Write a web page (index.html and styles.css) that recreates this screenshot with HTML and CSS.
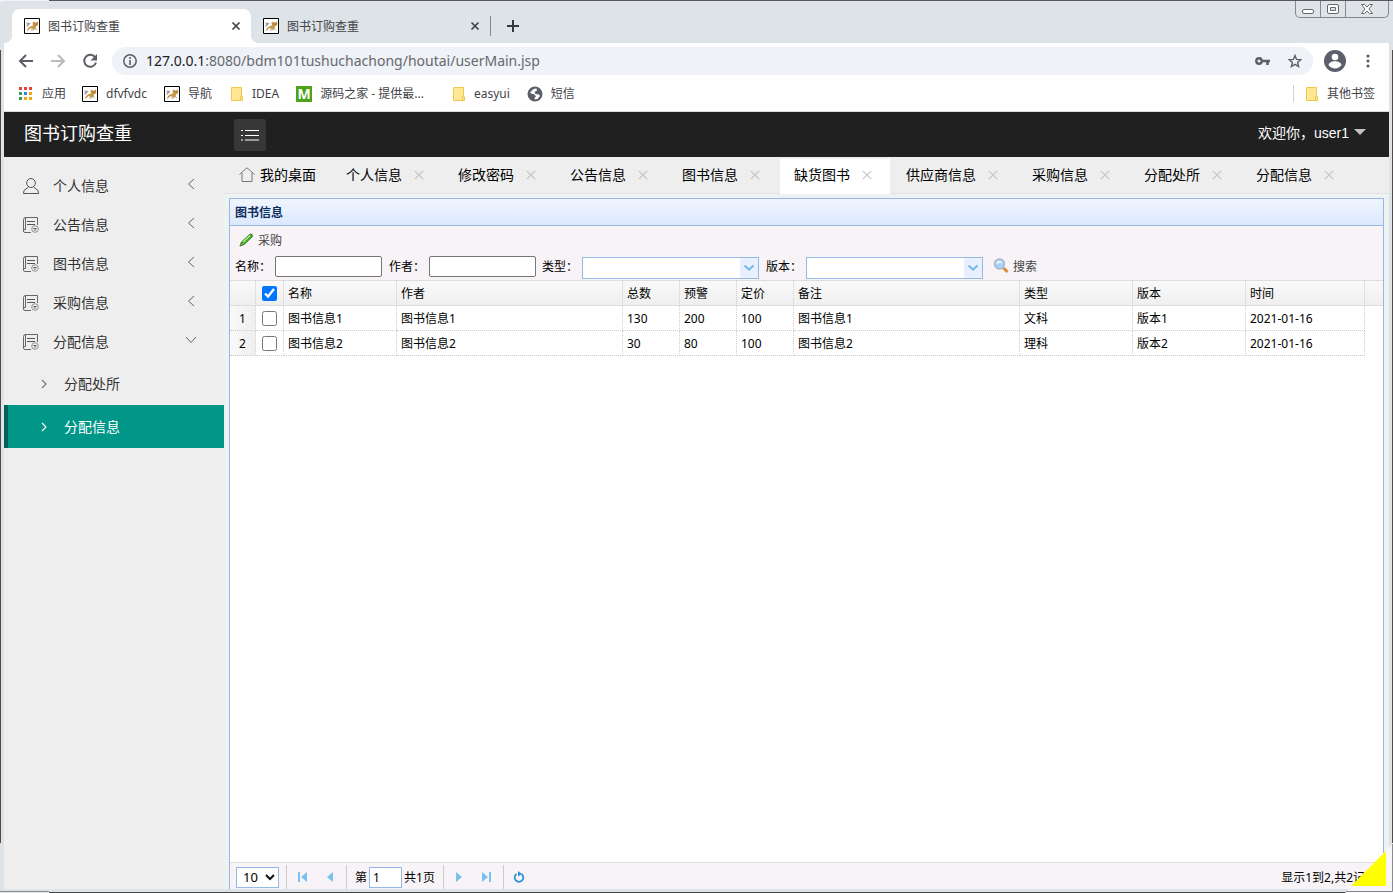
FILE: index.html
```
<!DOCTYPE html>
<html lang="zh-CN">
<head>
<meta charset="utf-8">
<title>图书订购查重</title>
<link rel="stylesheet" href="styles.css">
</head>
<body>
<svg class="defs" aria-hidden="true">
  <symbol id="cat" viewBox="0 0 16 16">
    <path d="M.5.5h15v15H.5z" fill="#fff" stroke="#000"/>
    <path d="M2.500 6l2-1.500L7 5.500 5 7 3.500 9z" fill="#b9b5ae"/>
    <path d="M8.500 4.500l1-1 1.500 1h1.500L14 3l.3 2.500-.5 2-1.800 1-.5 2.500-2 .5L6.500 10 4 12.500H2.500l2-3L7 8l2-.5z" fill="#c9994a"/>
    <path d="M2.300 5l2.700.5-2.500 3M7 11.500l1.500.8 2-.8M11.500 10.500l1.500 1.800" fill="none" stroke="#85837d" stroke-width=".7"/>
    <path d="M10.500 6h.8M12.500 6h.8" stroke="#5b3b10"/>
  </symbol>
  <symbol id="folder" viewBox="0 0 12 14">
    <path d="M.5.5h10v8.500l1 1v3.500H.5z" fill="#ffe793" stroke="#f0c64c"/>
    <path d="M9.500 13V9.500h1.500" fill="none" stroke="#f0c64c"/>
  </symbol>
  <symbol id="x" viewBox="0 0 10 10"><path d="M.8.8l8.400 8.400M9.200.8L.8 9.200" fill="none" stroke="currentColor" stroke-width="1.200"/></symbol>
  <symbol id="bx" viewBox="0 0 10 10"><path d="M1.500 1.500l7 7M8.500 1.500l-7 7" fill="none" stroke="#3f4348" stroke-width="1.700"/></symbol>
  <symbol id="left" viewBox="0 0 8 12"><path d="M7 1L1.500 6 7 11" fill="none" stroke="currentColor"/></symbol>
  <symbol id="right" viewBox="0 0 6 10"><path d="M1 1l4 4-4 4" fill="none" stroke="currentColor" stroke-width="1.200"/></symbol>
  <symbol id="doc" viewBox="0 0 16 16">
    <path d="M14.500 8V.5h-12v12H.5v1.500q0 1.500 1.500 1.500h6M2.500.5Q.5.500.5 2.500v11" fill="none" stroke="#666"/>
    <path d="M4 4.500h8M4 7.500h8" stroke="#555"/>
    <circle cx="12" cy="12" r="3.300" fill="#eee" stroke="#888" stroke-width=".9"/>
    <path d="M10.300 11.500h3.400M12 11.500v2.500" stroke="#666"/>
  </symbol>
  <symbol id="drop" viewBox="0 0 12 8"><path d="M1.500 1.500L6 5.500l4.500-4" fill="none" stroke="#76bdec" stroke-width="2.200"/></symbol>
</svg>
<div class="window">
  <header class="tabstrip">
    <div class="btab active"><svg class="i16"><use href="#cat"/></svg><span>图书订购查重</span><button aria-label="关闭标签页"><svg class="i10"><use href="#bx"/></svg></button></div>
    <div class="btab"><svg class="i16"><use href="#cat"/></svg><span>图书订购查重</span><button aria-label="关闭标签页"><svg class="i10"><use href="#bx"/></svg></button></div>
    <button class="newtab" aria-label="新标签页"><svg width="12" height="12" viewBox="0 0 12 12"><path d="M6 0v12M0 6h12" stroke="#35393e" stroke-width="2"/></svg></button>
    <div class="wincontrols">
      <button aria-label="最小化"><svg class="min" width="12" height="5" viewBox="0 0 12 5"><rect x=".5" y=".5" width="11" height="4" rx="1.500" fill="#fff" stroke="#666970"/></svg></button>
      <button aria-label="还原"><svg width="12" height="10" viewBox="0 0 12 10"><rect x=".5" y=".5" width="11" height="9" rx="1.500" fill="#fff" stroke="#666970"/><path d="M3.500 3.500h5v3h-5z" fill="#dee3e7" stroke="#666970"/></svg></button>
      <button class="wclose" aria-label="关闭"><svg width="12" height="10" viewBox="0 0 12 10"><path d="M.5.5h3L6 3 8.500.5h3L8 5l3.500 4.500h-3L6 7 3.500 9.500h-3L4 5z" fill="#fff" stroke="#666970"/></svg></button>
    </div>
  </header>
  <div class="navbar">
    <button class="back" aria-label="后退"><svg width="16" height="14" viewBox="0 0 16 14"><path d="M15 7H2M8 1L2 7l6 6" fill="none" stroke="#5c5f66" stroke-width="2"/></svg></button>
    <button class="fwd" aria-label="前进"><svg width="16" height="14" viewBox="0 0 16 14"><path d="M1 7h13M8 1l6 6-6 6" fill="none" stroke="#b9bbbf" stroke-width="2"/></svg></button>
    <button class="reload" aria-label="重新加载"><svg width="16" height="16" viewBox="0 0 16 16"><path d="M13.300 4.500A6 6 0 1 0 14 9.500" fill="none" stroke="#5c5f66" stroke-width="2"/><path d="M15 1v6.500H8.500z" fill="#5c5f66"/></svg></button>
    <div class="omnibox">
      <svg width="14" height="14" viewBox="0 0 14 14"><circle cx="7" cy="7" r="6.200" fill="none" stroke="#5c5f66" stroke-width="1.500"/><path d="M7 3v2M7 6v5" stroke="#5c5f66" stroke-width="1.600"/></svg>
      <span class="url"><b>127.0.0.1</b>:8080/bdm101tushuchachong/houtai/userMain.jsp</span>
      <svg width="15" height="8" viewBox="0 0 15 8"><circle cx="4" cy="4" r="2.700" fill="none" stroke="#5c5f66" stroke-width="2.400"/><path d="M7 4h8M12.500 4v4" stroke="#5c5f66" stroke-width="2.600"/></svg>
      <svg class="star" width="14" height="14" viewBox="0 0 14 14"><path d="M7 1.500l1.600 3.900 4.200.3-3.200 2.700 1 4.100L7 10.300l-3.600 2.200 1-4.100L1.200 5.700l4.200-.3z" fill="none" stroke="#5c5f66" stroke-width="1.400"/></svg>
    </div>
    <button class="avatar" aria-label="用户"><svg width="22" height="22" viewBox="0 0 22 22"><circle cx="11" cy="11" r="11" fill="#5c5f6b"/><circle cx="11" cy="7" r="3.300" fill="#fff"/><path d="M4.500 15c1-5 12-5 13 0-3 4.500-10 4.500-13 0z" fill="#fff"/></svg></button>
    <button class="more" aria-label="菜单"><svg width="4" height="14" viewBox="0 0 4 14" fill="#5c5f66"><circle cx="2" cy="2" r="1.600"/><circle cx="2" cy="7" r="1.600"/><circle cx="2" cy="12" r="1.600"/></svg></button>
  </div>
  <nav class="bookmarks">
    <a href="#" class="apps"><svg width="14" height="14" viewBox="0 0 14 14"><path d="M0 0h3v3H0zM5 0h3v3H5zM10 0h3v3h-3z" fill="#ea4335"/><path d="M0 5h3v3H0zM0 10h3v3H0z" fill="#2f9e58"/><path d="M5 5h3v3H5z" fill="#2b83f0"/><path d="M10 5h3v3h-3zM5 10h3v3H5zM10 10h3v3h-3z" fill="#f2a60c"/></svg><span>应用</span></a>
    <a href="#"><svg class="i16"><use href="#cat"/></svg><span>dfvfvdc</span></a>
    <a href="#"><svg class="i16"><use href="#cat"/></svg><span>导航</span></a>
    <a href="#" class="folder"><svg width="12" height="14"><use href="#folder"/></svg><span>IDEA</span></a>
    <a href="#"><i class="mlogo">M</i><span>源码之家 - 提供最...</span></a>
    <a href="#" class="folder late"><svg width="12" height="14"><use href="#folder"/></svg><span>easyui</span></a>
    <a href="#"><svg width="16" height="16" viewBox="0 0 16 16"><circle cx="8" cy="8" r="7.500" fill="#5c5f6b"/><path d="M3 6.500L6.500 3l3-.5.5 2-2.500 1.500 1 2 3.500.5L13 10l-2.500 3-3 .5L8 11 5.500 8.500z" fill="#fff"/><path d="M4 7.500l3.500 1 1.500 2-1.500 1z" fill="#5c5f6b"/></svg><span>短信</span></a>
    <a href="#" class="folder others"><svg width="12" height="14"><use href="#folder"/></svg><span>其他书签</span></a>
  </nav>
  <div class="app">
    <header class="apphead">
      <h1>图书订购查重</h1>
      <button class="burger" aria-label="折叠菜单"><svg width="18" height="12" viewBox="0 0 18 12"><path d="M0 1.500h2M4 1.500h14M0 6.500h2M4 6.500h14M0 11h2M4 11h14" stroke="#fff" stroke-width="1.200"/></svg></button>
      <button class="user"><span>欢迎你<span class="punct">，</span>user1</span><svg width="12" height="6" viewBox="0 0 12 6"><path d="M0 0h12L6 6z" fill="#c2c2c2"/></svg></button>
    </header>
    <div class="body">
      <aside class="sidebar">
        <a href="#" class="item"><svg class="i16" viewBox="0 0 16 16"><ellipse cx="8" cy="5" rx="4.300" ry="4.500" fill="none" stroke="#555"/><path d="M5.500 9L1 12.500.5 15.500h15l-.5-3L10.500 9" fill="none" stroke="#555"/></svg><span>个人信息</span><svg class="arrow"><use href="#left"/></svg></a>
        <a href="#" class="item"><svg class="i16"><use href="#doc"/></svg><span>公告信息</span><svg class="arrow"><use href="#left"/></svg></a>
        <a href="#" class="item"><svg class="i16"><use href="#doc"/></svg><span>图书信息</span><svg class="arrow"><use href="#left"/></svg></a>
        <a href="#" class="item"><svg class="i16"><use href="#doc"/></svg><span>采购信息</span><svg class="arrow"><use href="#left"/></svg></a>
        <a href="#" class="item open"><svg class="i16"><use href="#doc"/></svg><span>分配信息</span><svg class="arrow" viewBox="0 0 12 8"><path d="M1 1l5 5.500L11 1" fill="none" stroke="currentColor"/></svg></a>
        <a href="#" class="sub"><svg width="6" height="10"><use href="#right"/></svg><span>分配处所</span></a>
        <a href="#" class="sub selected"><svg width="6" height="10"><use href="#right"/></svg><span>分配信息</span></a>
      </aside>
      <main class="content">
        <nav class="tabs">
          <div class="tab home"><svg class="i16" viewBox="0 0 16 16"><path d="M.5 7.500L8 .8l7.500 6.700M3 6v8.500h10V6" fill="none" stroke="#777"/></svg><a href="#">我的桌面</a></div>
          <div class="tab"><a href="#">个人信息</a><button aria-label="关闭"><svg class="i10"><use href="#x"/></svg></button></div>
          <div class="tab"><a href="#">修改密码</a><button aria-label="关闭"><svg class="i10"><use href="#x"/></svg></button></div>
          <div class="tab"><a href="#">公告信息</a><button aria-label="关闭"><svg class="i10"><use href="#x"/></svg></button></div>
          <div class="tab"><a href="#">图书信息</a><button aria-label="关闭"><svg class="i10"><use href="#x"/></svg></button></div>
          <div class="tab current"><a href="#">缺货图书</a><button aria-label="关闭"><svg class="i10"><use href="#x"/></svg></button></div>
          <div class="tab"><a href="#">供应商信息</a><button aria-label="关闭"><svg class="i10"><use href="#x"/></svg></button></div>
          <div class="tab"><a href="#">采购信息</a><button aria-label="关闭"><svg class="i10"><use href="#x"/></svg></button></div>
          <div class="tab"><a href="#">分配处所</a><button aria-label="关闭"><svg class="i10"><use href="#x"/></svg></button></div>
          <div class="tab"><a href="#">分配信息</a><button aria-label="关闭"><svg class="i10"><use href="#x"/></svg></button></div>
        </nav>
        <section class="panel">
          <h2>图书信息</h2>
          <div class="tools">
            <button class="tool"><svg class="i16" viewBox="0 0 16 16"><path d="M2 14l1.500-4L11.500 2.500q1.500-1 2.500 0t0 2.500L6 12.500z" fill="#4fb52a" stroke="#1f6a17" stroke-width=".9"/><path d="M5 10l7-6.500" stroke="#b5ea8b" stroke-width="1.400"/><path d="M2 14l1-2.800 1.800 1.600z" fill="#e8d9b0" stroke="#4a5a30" stroke-width=".6"/></svg><span>采购</span></button>
            <form class="search">
              <label for="name">名称<span class="punct">：</span></label><input id="name" type="text">
              <label for="author">作者<span class="punct">：</span></label><input id="author" type="text">
              <label for="type">类型<span class="punct">：</span></label><span class="combo"><select id="type"><option></option></select><i><svg width="12" height="8"><use href="#drop"/></svg></i></span>
              <label for="edition">版本<span class="punct">：</span></label><span class="combo"><select id="edition"><option></option></select><i><svg width="12" height="8"><use href="#drop"/></svg></i></span>
              <button class="tool find" type="button"><svg class="i16" viewBox="0 0 16 16"><path d="M10.500 10l4 4" stroke="#dc8a2e" stroke-width="3"/><circle cx="6.500" cy="6" r="5" fill="#a6d4f8" stroke="#a9b6cb" stroke-width="1.400"/><path d="M3 6q.5-3 3.500-3.300Q9 3 9.500 5 6 4.500 3 6z" fill="#e6f5ff"/></svg><span>搜索</span></button>
            </form>
          </div>
          <table>
            <colgroup><col class="c-no"><col class="c-chk"><col class="c-m"><col class="c-l"><col class="c-s"><col class="c-s"><col class="c-s"><col class="c-l"><col class="c-m"><col class="c-m"><col class="c-date"><col></colgroup>
            <thead><tr><th></th><th><input type="checkbox" checked aria-label="全选"></th><th>名称</th><th>作者</th><th>总数</th><th>预警</th><th>定价</th><th>备注</th><th>类型</th><th>版本</th><th>时间</th><th></th></tr></thead>
            <tbody>
              <tr><td>1</td><td><input type="checkbox" aria-label="选择第1行"></td><td>图书信息1</td><td>图书信息1</td><td>130</td><td>200</td><td>100</td><td>图书信息1</td><td>文科</td><td>版本1</td><td>2021-01-16</td><td></td></tr>
              <tr><td>2</td><td><input type="checkbox" aria-label="选择第2行"></td><td>图书信息2</td><td>图书信息2</td><td>30</td><td>80</td><td>100</td><td>图书信息2</td><td>理科</td><td>版本2</td><td>2021-01-16</td><td></td></tr>
            </tbody>
          </table>
          <footer class="pager">
            <span class="size"><select aria-label="每页条数"><option>10</option></select><svg width="10" height="7" viewBox="0 0 10 7"><path d="M1 1l4 4 4-4" fill="none" stroke="#111" stroke-width="2"/></svg></span>
            <div class="group"><button aria-label="首页"><svg width="9" height="10" viewBox="0 0 9 10"><path d="M0 0h2v10H0zM9 0v10L3 5z" fill="#7cc0ef"/></svg></button><button aria-label="上一页"><svg width="9" height="10" viewBox="0 0 9 10"><path d="M7 0v10L1 5z" fill="#7cc0ef"/></svg></button></div>
            <div class="group page"><label for="page">第</label><input id="page" type="text" value="1"><span>共1页</span></div>
            <div class="group"><button aria-label="下一页"><svg width="9" height="10" viewBox="0 0 9 10"><path d="M2 0v10l6-5z" fill="#7cc0ef"/></svg></button><button aria-label="末页"><svg width="9" height="10" viewBox="0 0 9 10"><path d="M7 0h2v10H7zM0 0v10l6-5z" fill="#7cc0ef"/></svg></button></div>
            <div class="group"><button aria-label="刷新"><svg width="12" height="12" viewBox="0 0 12 12"><path d="M8.500 3A4.300 4.300 0 1 1 3.500 3" fill="none" stroke="#2e93d6" stroke-width="1.800"/><path d="M5 0l4 3-4 2.500z" fill="#2e93d6"/></svg></button></div>
            <span class="info">显示1到2,共2记录</span>
          </footer>
        </section>
      </main>
    </div>
  </div>
  <svg class="corner" width="48" height="50" viewBox="0 0 48 50" aria-hidden="true"><path d="M48 0v50H0z" fill="#f6f6fa"/><path d="M47.500 1v47.500H1" fill="none" stroke="#8b8b8f"/><path d="M41 8v35H6z" fill="#ff0"/></svg>
</div>
</body>
</html>
```
FILE: styles.css
```
* { box-sizing: border-box; }
body { margin: 0; font: 12px/16px "Noto Sans", "Noto Sans CJK SC", sans-serif; color: #000; }
button { border: 0; padding: 0; background: none; font: inherit; color: inherit; display: flex; align-items: center; justify-content: center; }
a { color: inherit; text-decoration: none; }
svg { display: block; flex: none; }
h1, h2 { margin: 0; }
input, select { font: inherit; margin: 0; }
.defs { position: absolute; width: 0; height: 0; }
.i16 { width: 16px; height: 16px; }
.i10 { width: 10px; height: 10px; }
.punct { font-family: "Noto Sans CJK TC", sans-serif; line-height: 1; }

.window {
  position: relative; display: flex; flex-direction: column; height: 100vh; overflow: hidden; padding: 1px 4px 4px;
  background:
    linear-gradient(#4f4a4c, #4f4a4c) 0 50px / 1px calc(100% - 100px) no-repeat,
    linear-gradient(#4f4a4c, #4f4a4c) 100% 50px / 1px calc(100% - 100px) no-repeat,
    linear-gradient(#5b5659, #5b5659) 49px 0 / calc(100% - 49px) 1px no-repeat,
    linear-gradient(#8b8b8f, #8b8b8f) 0 calc(100% - 1px) / 49px 1px no-repeat,
    linear-gradient(#444, #444) 49px 100% / 100% 1px no-repeat,
    linear-gradient(#f4f1f4, #f4f1f4) 0 0 / 49px 2px no-repeat,
    #dee3e7;
}

.tabstrip { display: flex; flex: none; height: 42px; padding: 8px 0 0 8px; background: #dee3e7; }
.btab { display: flex; align-items: center; gap: 8px; width: 239px; padding: 0 10px 0 12px; color: #3f4348; }
.btab span { flex: 1; padding-top: 2px; }
.btab.active { position: relative; background: #fff; border-radius: 8px 8px 0 0; }
.btab.active::before, .btab.active::after { content: ""; position: absolute; bottom: 0; width: 8px; height: 8px; }
.btab.active::before { left: -8px; background: radial-gradient(circle at 0 0, transparent 8px, #fff 8px); }
.btab.active::after { right: -8px; background: radial-gradient(circle at 100% 0, transparent 8px, #fff 8px); }
.newtab { align-self: center; height: 20px; padding-left: 16px; border-left: 1px solid #85898e; }
.wincontrols { position: absolute; top: 1px; right: 4px; display: flex; border: 1px solid #85868e; border-top: 0; border-radius: 0 0 5px 5px; }
.wincontrols button { width: 25px; height: 16px; border-right: 1px solid #85868e; }
.wincontrols .wclose { width: 42px; border: 0; }
.min { margin-top: 4px; }

.navbar { display: flex; flex: none; align-items: center; height: 36px; padding: 0 19px 0 14px; background: #fff; }
.back, .fwd { width: 16px; margin-right: 16px; }
.reload { margin-right: 14px; }
.omnibox { display: flex; flex: 1; align-items: center; gap: 9px; height: 28px; padding: 0 11px; border-radius: 14px; background: #eff2f7; }
.url { flex: 1; font-size: 14px; line-height: 20px; color: #66696e; }
.url b { font-weight: 400; color: #202124; }
.star { margin-left: 9px; }
.avatar { margin: 0 20px 0 11px; }

.bookmarks { display: flex; flex: none; align-items: center; gap: 17px; height: 32px; padding: 0 14px 3px 15px; background: #fff; color: #3f4348; }
.bookmarks a { display: flex; align-items: center; gap: 8px; white-space: nowrap; }
.bookmarks span { padding-top: 1px; }
.bookmarks .apps { gap: 9px; margin-right: -1px; }
.bookmarks .folder { gap: 9px; padding-left: 2px; }
.bookmarks .late { padding-left: 12px; }
.bookmarks .others { margin-left: auto; padding-left: 12px; border-left: 1px solid #cfd1d4; }
.mlogo { display: grid; place-items: center; width: 16px; height: 16px; background: #4ea21d; color: #fff; font: bold 14px/16px "Open Sans", sans-serif; }

.app { display: flex; flex: 1; flex-direction: column; min-height: 0; border-top: 1px solid #d9dbdd; background: #eee; }
.apphead { display: flex; flex: none; align-items: center; height: 45px; padding: 0 23px 0 20px; background: #202020; color: #fff; font-size: 14px; }
.apphead h1 { width: 210px; padding-bottom: 4px; font-size: 18px; font-weight: 400; line-height: 24px; }
.burger { width: 32px; height: 32px; border-radius: 2px; background: #373737; }
.user { margin-left: auto; padding-bottom: 3px; gap: 5px; font-family: "Liberation Sans", "Noto Sans CJK SC", sans-serif; }
.user svg { margin-bottom: 3px; }
.body { display: flex; flex: 1; min-height: 0; font-size: 14px; line-height: 20px; }
.sidebar { flex: none; width: 220px; padding-top: 10px; color: #333; }
.item { display: flex; align-items: center; height: 39px; padding: 0 27px 2px 19px; }
.item span { flex: 1; padding: 1px 0 0 14px; }
.arrow { width: 8px; height: 12px; margin: 0 2px 4px 0; color: #666; }
.open .arrow { width: 12px; height: 8px; margin-right: 0; }
.sub { display: flex; align-items: center; gap: 17px; height: 43px; padding-left: 37px; }
.sub svg { color: #777; }
.sub.selected { padding-left: 33px; border-left: 4px solid #005f56; background: #009688; color: #fff; }
.sub.selected svg { color: #fff; }

.content { display: flex; flex: 1; flex-direction: column; min-width: 0; background: #eef2f0; }
.tabs { display: flex; flex: none; gap: 2px; height: 37px; padding-top: 2px; background: #eee; border-bottom: 1px solid #e2e2e2; }
.tab { display: flex; align-items: center; gap: 12px; padding: 0 18px 3px 14px; white-space: nowrap; }
.tab button { color: #c4c4c4; }
.tab.home { gap: 5px; padding: 0 14px 3px 15px; }
.tab.current { margin-bottom: -1px; padding-bottom: 4px; background: #fff; }
.panel { display: flex; flex: 1; flex-direction: column; min-height: 0; margin: 4px 5px 0; border: 1px solid #95b8e7; border-bottom: 0; background: #fff; font-size: 12px; line-height: 16px; }
.panel h2 { padding: 6px 5px 4px; border-bottom: 1px solid #95b8e7; background: linear-gradient(#eff3ff, #e6f0ff 50%, #e3ecff 60%, #dceafd); color: #0e2d5f; font-size: 12px; line-height: 16px; }
.tools { height: 55px; padding: 2px 5px; border-bottom: 1px solid #ddd; background: #f8f3f7; }
.tool { gap: 4px; height: 24px; padding-left: 3px; color: #444; }
.tool span { padding-top: 2px; }
.search { display: flex; align-items: center; height: 28px; white-space: nowrap; }
.search label { width: 36px; margin-right: 4px; padding-top: 2px; }
.search input { width: 107px; height: 21px; margin-right: 7px; border: 1px solid #767676; border-radius: 2px; background: #fff; }
.search label[for="type"] { margin-left: -1px; }
.combo { position: relative; width: 177px; height: 22px; margin: 3px 7px 0 0; }
.combo select { width: 100%; height: 22px; appearance: none; border: 1px solid #95b8e7; border-radius: 0; background: #fff; }
.combo i { position: absolute; top: 1px; right: 1px; display: grid; place-items: center; width: 18px; height: 20px; background: #e8f0fe; pointer-events: none; }

table { width: 100%; table-layout: fixed; border-collapse: separate; border-spacing: 0; }
.c-no { width: 26px; }
.c-chk { width: 28px; }
.c-s { width: 57px; }
.c-m { width: 113px; }
.c-l { width: 226px; }
.c-date { width: 119px; }
th, td { height: 25px; padding: 2px 4px 0; border-right: 1px dotted #ccc; border-bottom: 1px dotted #ccc; font-weight: 400; text-align: left; }
th { border-bottom: 1px solid #ddd; background: linear-gradient(#f9f9f9, #efefef); }
td:first-child { padding: 2px 0 0; background: linear-gradient(90deg, #f9f9f9, #efefef); text-align: center; }
th:last-child, td:last-child { border-right: 0; }
td:last-child { border-bottom: 0; }
th:nth-child(2), td:nth-child(2) { padding-top: 0; }
th input, td input { display: block; width: 15px; height: 15px; margin: 0 2px; }

.pager { display: flex; align-items: center; height: 27px; margin-top: auto; padding: 2px 6px 0; border-top: 1px solid #ddd; background: #f8f3f7; white-space: nowrap; }
.size { position: relative; margin-right: 7px; }
.size select { display: block; width: 43px; height: 21px; padding: 0 6px; appearance: none; border: 1px solid #95b8e7; background: #fff; font-size: 13px; line-height: 18px; }
.size svg { position: absolute; top: 7px; right: 4px; pointer-events: none; }
.group { display: flex; align-items: center; height: 24px; padding: 0 2px 0 1px; border-left: 1px solid #ccc; }
.group button { width: 28px; height: 24px; }
.group.page { padding: 0 8px; }
.page label, .page span, .info { padding-top: 2px; }
.page input { width: 33px; height: 21px; margin: 0 2px; padding: 0 3px; border: 1px solid #95b8e7; background: #fff; }
.info { margin-left: auto; }
.corner { position: absolute; right: 0; bottom: 0; }
```
